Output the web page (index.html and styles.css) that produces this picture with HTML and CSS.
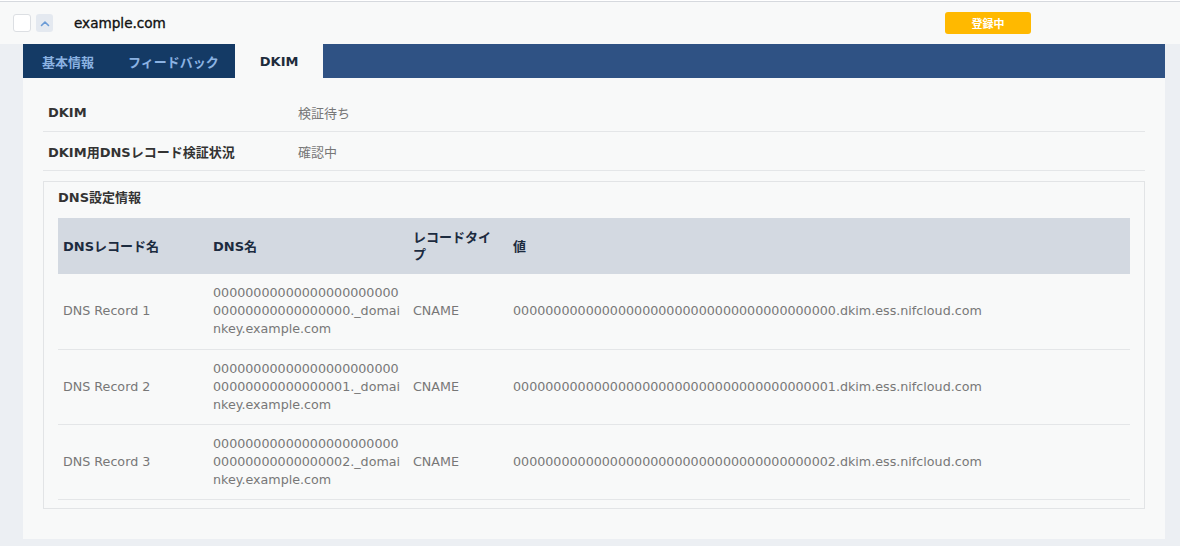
FILE: index.html
```html
<!DOCTYPE html>
<html lang="ja">
<head>
<meta charset="utf-8">
<title>example.com</title>
<link rel="stylesheet" href="styles.css">
</head>
<body>
<div class="header">
  <span class="check"></span>
  <span class="toggle">
    <svg width="10" height="7" viewBox="0 0 10 7"><path d="M1.5 5.5 L5 2 L8.5 5.5" fill="none" stroke="#6a9bd6" stroke-width="1.6" stroke-linecap="round" stroke-linejoin="round"/></svg>
  </span>
  <span class="domain">example.com</span>
  <span class="badge">登録中</span>
</div>
<div class="wrap">
  <div class="panel">
    <div class="tabbar">
      <div class="tabs">
        <span class="tab">基本情報</span>
        <span class="tab">フィードバック</span>
        <span class="tab active">DKIM</span>
      </div>
    </div>
    <div class="content">
      <div class="row"><span class="label">DKIM</span><span class="value">検証待ち</span></div>
      <div class="row"><span class="label">DKIM用DNSレコード検証状況</span><span class="value">確認中</span></div>
      <div class="box">
        <div class="box-title">DNS設定情報</div>
        <table class="dns">
          <colgroup><col class="c1"><col class="c2"><col class="c3"><col></colgroup>
          <thead>
            <tr><th>DNSレコード名</th><th>DNS名</th><th class="th-type">レコードタイプ</th><th>値</th></tr>
          </thead>
          <tbody>
            <tr><td>DNS Record 1</td><td class="name">0000000000000000000000000000000000000000._domainkey.example.com</td><td>CNAME</td><td>0000000000000000000000000000000000000000.dkim.ess.nifcloud.com</td></tr>
            <tr><td>DNS Record 2</td><td class="name">0000000000000000000000000000000000000001._domainkey.example.com</td><td>CNAME</td><td>0000000000000000000000000000000000000001.dkim.ess.nifcloud.com</td></tr>
            <tr><td>DNS Record 3</td><td class="name">0000000000000000000000000000000000000002._domainkey.example.com</td><td>CNAME</td><td>0000000000000000000000000000000000000002.dkim.ess.nifcloud.com</td></tr>
          </tbody>
        </table>
      </div>
    </div>
  </div>
</div>
</body>
</html>
```
FILE: styles.css
```css
* { box-sizing: border-box; }
html, body { margin: 0; padding: 0; }
body {
  font-family: "DejaVu Sans", "Noto Sans CJK JP", sans-serif;
  font-size: 13px;
  color: #333;
  width: 1180px;
  height: 546px;
  overflow: hidden;
  background: #eceff3;
}
.header {
  display: flex;
  align-items: center;
  height: 44px;
  border-top: 1px solid #ffffff;
  box-shadow: inset 0 1px 0 #d6d9de;
  background: #f8f9f9;
  padding: 1px 0 0 13px;
}
.check {
  width: 18px;
  height: 18px;
  background: #fff;
  border: 1px solid #dcdfe3;
  border-radius: 3px;
}
.toggle {
  width: 17px;
  height: 18px;
  margin-left: 5px;
  background: #e4e9f0;
  border-radius: 3px;
  display: flex;
  align-items: center;
  justify-content: center;
  padding-top: 1px;
}
.domain {
  margin-left: 21px;
  font-size: 13.6px;
  color: #111;
  font-weight: normal;
  -webkit-text-stroke: 0.35px #111;
}
.badge {
  margin-left: auto;
  margin-right: 149px;
  width: 86px;
  height: 22px;
  border-radius: 3px;
  background: #ffb900;
  color: #fff;
  font-weight: bold;
  font-size: 11px;
  display: flex;
  align-items: center;
  justify-content: center;
}
.wrap {
  margin-left: 8px;
  padding: 0 15px 7px;
  background: #eceff3;
}
.panel {
  background: #f8f9f9;
  padding-bottom: 30px;
}
.tabbar {
  display: flex;
  height: 34px;
  background: #2f5284;
}
.tabs {
  display: flex;
  background: #143a65;
}
.tab {
  display: flex;
  align-items: center;
  padding: 0 16px 0 19px;
  color: #8bb2e2;
  font-weight: bold;
  font-size: 13px;
}
.tab + .tab { padding-left: 18px; }
.tab.active {
  background: #f8f9f9;
  color: #1e2c3c;
  padding: 0 25px;
}
.content {
  padding: 15px 20px 0;
}
.row {
  display: flex;
  align-items: center;
  height: 39px;
  border-bottom: 1px solid #e4e6e8;
  padding-left: 5px;
}
.label {
  width: 250px;
  font-weight: bold;
  color: #333;
}
.value {
  color: #777;
}
.box {
  margin-top: 10px;
  border: 1px solid #e2e4e6;
  padding: 7px 14px 8px;
}
.box-title {
  font-weight: bold;
  line-height: 18px;
  color: #333;
  margin-bottom: 11px;
}
.dns {
  width: 100%;
  border-collapse: collapse;
  table-layout: fixed;
}
.dns col.c1 { width: 150px; }
.dns col.c2 { width: 200px; }
.dns col.c3 { width: 100px; }
.dns th {
  background: #d3d9e1;
  color: #1c2b3f;
  font-weight: bold;
  text-align: left;
  vertical-align: middle;
  line-height: 17px;
  height: 56px;
  padding: 0 10px 0 5px;
}
.dns td {
  color: #777;
  font-size: 12.7px;
  line-height: 18px;
  vertical-align: middle;
  height: 75px;
  padding: 0 10px 0 5px;
  border-bottom: 1px solid #e4e6e8;
}
.dns td.name {
  word-break: break-all;
  padding-right: 5px;
}
```
